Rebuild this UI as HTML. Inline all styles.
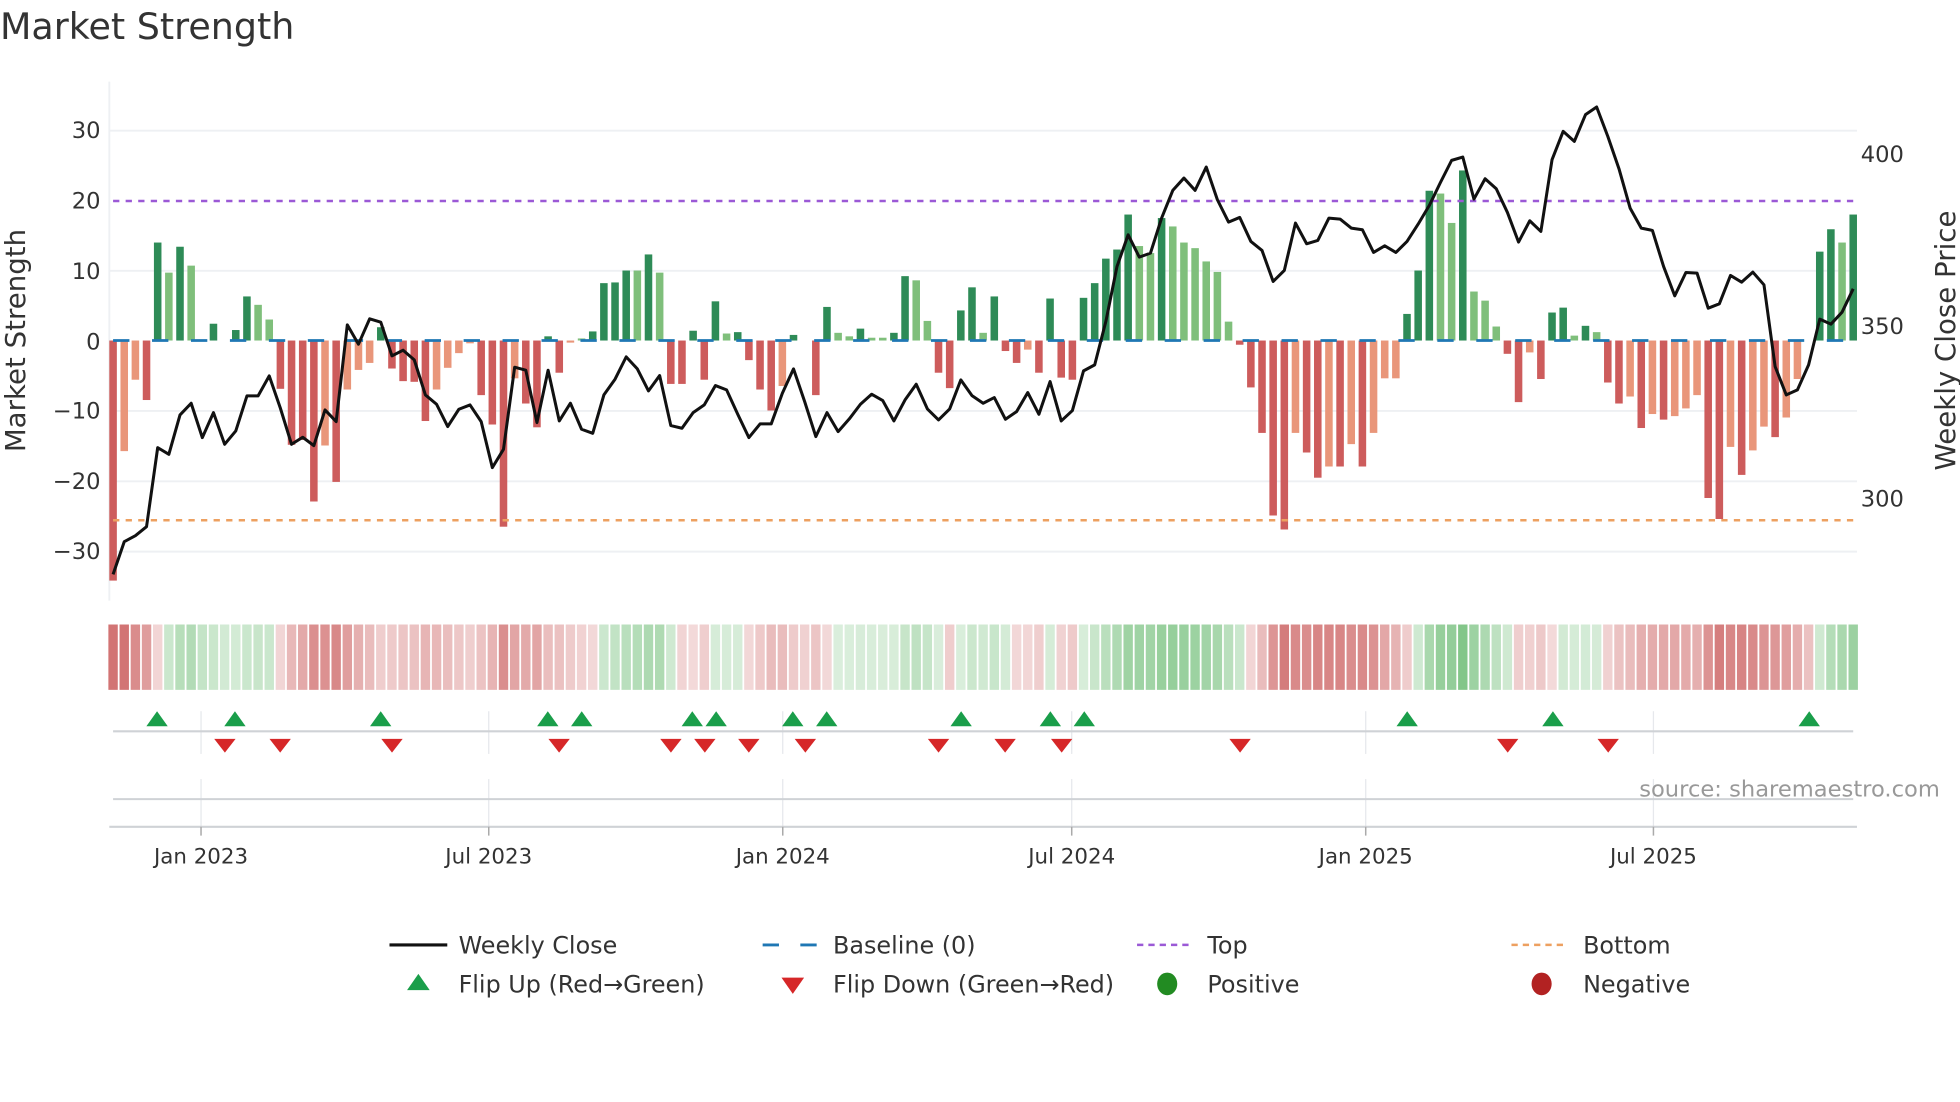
<!DOCTYPE html>
<html><head><meta charset="utf-8">
<style>
html,body{margin:0;padding:0;background:#fff;}
svg{display:block;}
text{font-family:"DejaVu Sans","Liberation Sans",sans-serif;}
</style></head>
<body>
<svg id="c" width="1960" height="1102" viewBox="0 0 1560 877" preserveAspectRatio="none" xmlns="http://www.w3.org/2000/svg">
<rect width="1560" height="877" fill="#fff"/>
<text x="0" y="31" font-size="29" fill="#333">Market Strength</text>
<g stroke="#eef0f3" stroke-width="1.5">
<line x1="87" x2="1478" y1="104" y2="104"/><line x1="87" x2="1478" y1="215.5" y2="215.5"/>
<line x1="87" x2="1478" y1="327" y2="327"/><line x1="87" x2="1478" y1="383" y2="383"/><line x1="87" x2="1478" y1="439" y2="439"/>
<line x1="87" x2="87" y1="65" y2="478"/>
</g>
<g font-size="18" fill="#333" text-anchor="end">
<text x="80" y="110">30</text><text x="80" y="166">20</text><text x="80" y="222">10</text><text x="80" y="278">0</text>
<text x="80" y="333">−10</text><text x="80" y="389">−20</text><text x="80" y="445">−30</text>
</g>
<g font-size="18" fill="#333">
<text x="1481" y="129">400</text><text x="1481" y="266">350</text><text x="1481" y="403">300</text>
</g>
<text transform="translate(20,271) rotate(-90)" font-size="22" fill="#333" text-anchor="middle">Market Strength</text>
<text transform="translate(1556,271) rotate(-90)" font-size="22" fill="#333" text-anchor="middle">Weekly Close Price</text>
<g id="bars"></g>
<line x1="90" x2="1475" y1="160" y2="160" stroke="#9b59d6" stroke-width="2" stroke-dasharray="5 5"/>
<line x1="90" x2="1475" y1="414" y2="414" stroke="#eda060" stroke-width="2" stroke-dasharray="5 5"/>
<line x1="90" x2="1475" y1="271" y2="271" stroke="#1f77b4" stroke-width="2.2" stroke-dasharray="13 18"/>
<polyline id="price" fill="none" stroke="#111" stroke-width="2.4" stroke-linejoin="round"/>
<g id="heat"></g>
<g stroke="#e6e8ec" stroke-width="1">
<line x1="160" x2="160" y1="566" y2="600"/><line x1="389" x2="389" y1="566" y2="600"/><line x1="623" x2="623" y1="566" y2="600"/>
<line x1="853" x2="853" y1="566" y2="600"/><line x1="1087" x2="1087" y1="566" y2="600"/><line x1="1316" x2="1316" y1="566" y2="600"/>
<line x1="160" x2="160" y1="620" y2="658"/><line x1="389" x2="389" y1="620" y2="658"/><line x1="623" x2="623" y1="620" y2="658"/>
<line x1="853" x2="853" y1="620" y2="658"/><line x1="1087" x2="1087" y1="620" y2="658"/><line x1="1316" x2="1316" y1="620" y2="658"/>
</g>
<line x1="90" x2="1475" y1="582" y2="582" stroke="#cfd2d6" stroke-width="1.6"/>
<line x1="90" x2="1475" y1="636" y2="636" stroke="#cfd2d6" stroke-width="1.6"/>
<line x1="87" x2="1478" y1="658" y2="658" stroke="#cfd2d6" stroke-width="1.6"/>
<g stroke="#aaa" stroke-width="1.2">
<line x1="160" x2="160" y1="658" y2="665"/><line x1="389" x2="389" y1="658" y2="665"/><line x1="623" x2="623" y1="658" y2="665"/>
<line x1="853" x2="853" y1="658" y2="665"/><line x1="1087" x2="1087" y1="658" y2="665"/><line x1="1316" x2="1316" y1="658" y2="665"/>
</g>
<g id="flips"></g>
<text x="1544" y="634" font-size="18" fill="#999" text-anchor="end">source: sharemaestro.com</text>
<g font-size="17" fill="#333" text-anchor="middle">
<text x="160" y="687">Jan 2023</text><text x="389" y="687">Jul 2023</text><text x="623" y="687">Jan 2024</text>
<text x="853" y="687">Jul 2024</text><text x="1087" y="687">Jan 2025</text><text x="1316" y="687">Jul 2025</text>
</g>
<line x1="310" x2="356" y1="752" y2="752" stroke="#111" stroke-width="2.5"/>
<line x1="607" x2="650" y1="752" y2="752" stroke="#1f77b4" stroke-width="2.2" stroke-dasharray="13 17"/>
<line x1="905" x2="948" y1="752" y2="752" stroke="#9b59d6" stroke-width="2" stroke-dasharray="5 4"/>
<line x1="1203" x2="1247" y1="752" y2="752" stroke="#eda060" stroke-width="2" stroke-dasharray="5 4"/>
<polygon points="324,788 342,788 333,775" fill="#1a9e4a"/>
<polygon points="622,778 640,778 631,791" fill="#d62728"/>
<ellipse cx="929" cy="783" rx="8" ry="9" fill="#228b22"/>
<ellipse cx="1227" cy="783" rx="8" ry="9" fill="#b22222"/>
<g font-size="19" fill="#333">
<text x="365" y="759">Weekly Close</text><text x="663" y="759">Baseline (0)</text><text x="961" y="759">Top</text><text x="1260" y="759">Bottom</text>
<text x="365" y="790">Flip Up (Red→Green)</text><text x="663" y="790">Flip Down (Green→Red)</text><text x="961" y="790">Positive</text><text x="1260" y="790">Negative</text>
</g>
</svg>
<script>
(function(){
var NS="http://www.w3.org/2000/svg";
function el(t,a,p){var e=document.createElementNS(NS,t);for(var k in a)e.setAttribute(k,a[k]);p.appendChild(e);return e;}
var B=[[-34.3,1],[-15.8,0],[-5.6,0],[-8.5,1],[14,1],[9.7,0],[13.4,1],[10.7,0],[0,1],[2.4,1],[0,1],[1.5,1],[6.3,1],[5.1,0],[3,0],[-6.9,1],[-14.9,1],[-14.2,1],[-23,1],[-15,0],[-20.2,1],[-7,0],[-4.2,0],[-3.2,0],[1.9,1],[-4,1],[-5.8,1],[-5.9,1],[-11.5,1],[-7,0],[-3.9,0],[-1.8,0],[-0.4,0],[-7.8,1],[-12,1],[-26.6,1],[-5.4,0],[-9,1],[-12.4,1],[0.6,1],[-4.6,1],[-0.3,0],[0.3,0],[1.3,1],[8.2,1],[8.3,1],[10,1],[10,0],[12.3,1],[9.7,0],[-6.2,1],[-6.2,1],[1.4,1],
[-5.6,1],[5.6,1],[1,0],[1.2,1],[-2.8,1],[-7,1],[-10,1],[-6.5,0],[0.8,1],[0,1],[-7.8,1],[4.8,1],[1.1,0],[0.6,0],[1.7,1],[0.4,0],[0.4,0],[1.1,1],[9.2,1],[8.6,0],[2.8,0],[-4.6,1],[-6.8,1],[4.3,1],[7.6,1],[1.1,0],[6.3,1],[-1.5,1],[-3.2,1],[-1.3,0],[-4.6,1],[6,1],[-5.3,1],[-5.6,1],[6.1,1],[8.2,1],[11.7,1],[13,1],[18,1],[13.5,0],[12.5,0],[17.5,1],[16.3,0],[14,0],[13.2,0],[11.3,0],[9.8,0],[2.7,0],[-0.6,1],[-6.7,1],[-13.2,1],[-25,1],[-27,1],
[-13.2,0],[-16,1],[-19.6,1],[-18,0],[-18,1],[-14.8,0],[-18,1],[-13.2,0],[-5.4,0],[-5.4,0],[3.8,1],[10,1],[21.4,1],[21,0],[16.8,0],[24.3,1],[7,0],[5.7,0],[2,0],[-1.9,1],[-8.8,1],[-1.7,0],[-5.5,1],[4,1],[4.7,1],[0.7,0],[2.1,1],[1.2,0],[-6,1],[-9,1],[-8,0],[-12.5,1],[-10.5,0],[-11.3,1],[-10.8,0],[-9.7,0],[-7.8,0],[-22.5,1],[-25.5,1],[-15.2,0],[-19.2,1],[-15.7,0],[-12.3,0],[-13.8,1],[-11,0],[-5.5,0],[0,1],[12.7,1],[15.9,1],[14,0],[18,1]];
var P=[1478,1380,1362,1335,1098,1118,1000,965,1068,993,1088,1048,943,943,883,980,1088,1067,1092,985,1020,730,788,712,722,823,806,835,940,968,1035,983,970,1020,1158,1103,857,866,1023,866,1018,965,1043,1055,940,893,826,862,928,882,1032,
1040,993,970,912,925,998,1068,1027,1027,935,862,960,1065,993,1050,1012,968,938,957,1018,955,908,982,1015,982,895,942,965,948,1013,990,933,998,900,1018,987,868,850,720,555,460,527,515,410,327,290,327,257,355,422,408,480,507,600,567,
425,487,477,410,413,440,445,513,493,513,480,428,372,303,237,227,353,292,322,393,482,418,450,235,150,180,100,77,165,262,380,440,447,555,643,573,575,680,667,582,602,572,610,855,940,925,850,713,728,692,622];
var n=B.length,dx=(1475-90)/(n-1);
var bars=document.getElementById('bars'),heat=document.getElementById('heat');
var ema=0;
for(var i=0;i<n;i++){
 var v=B[i][0],x=90+dx*i,col;
 if(v>=0)col=B[i][1]?'#2e8b57':'#7fbf7b';else col=B[i][1]?'#cd5c5c':'#e9967a';
 var y0=271,y1=271-v*5.57;
 if(Math.abs(v)>0.05)el('rect',{x:(x-3).toFixed(2),y:Math.min(y0,y1).toFixed(2),width:6,height:Math.abs(y1-y0).toFixed(2),fill:col},bars);
 ema=i==0?v:ema*0.55+v*0.45;
 var t=Math.min(Math.abs(ema)/22,1),a=0.22+0.6*t;
 var base=ema>=0?[92,180,100]:[200,85,85];
 var c=base.map(function(b){return Math.round(255-(255-b)*a);});
 el('rect',{x:(x-dx/2+0.7).toFixed(2),y:497,width:(dx-1.4).toFixed(2),height:52,fill:'rgb('+c.join(',')+')'},heat);
}
var pts=[];
for(var j=0;j<P.length;j++){pts.push((90+dx*j).toFixed(2)+','+(104+(P[j]-148)*0.2655).toFixed(2));}
document.getElementById('price').setAttribute('points',pts.join(' '));
var f=document.getElementById('flips');
[125,187,303,436,463,551,570,631,658,765,836,863,1120,1236,1440].forEach(function(x){el('polygon',{points:(x-8.5)+',578 '+(x+8.5)+',578 '+x+',566',fill:'#1a9e4a'},f);});
[179,223,312,445,534,561,596,641,747,800,845,987,1200,1280].forEach(function(x){el('polygon',{points:(x-8.5)+',588 '+(x+8.5)+',588 '+x+',599',fill:'#d62728'},f);});
})();
</script>
</body></html>
